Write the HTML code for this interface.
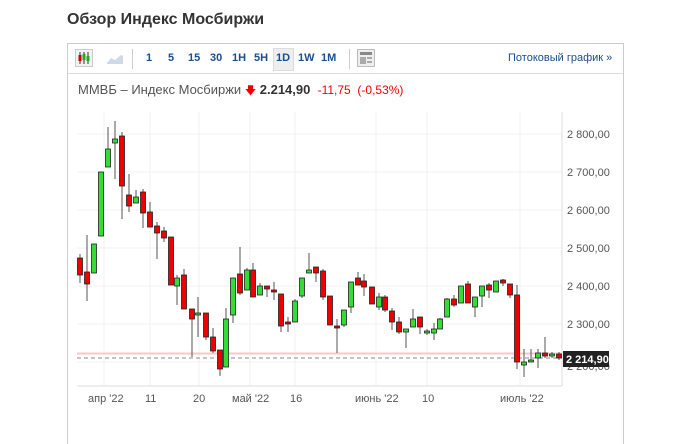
<!DOCTYPE html><html><head><meta charset="utf-8"><style>
body{margin:0;background:#fff;font-family:"Liberation Sans",sans-serif;width:675px;height:429px;overflow:hidden;position:relative}
.t{position:absolute;left:67px;top:11px;font-size:16px;font-weight:bold;color:#333}
.p{position:absolute;left:67px;top:43px;width:555px;height:400px;border:1px solid #ccc;border-bottom:none}
.tb{position:absolute;left:0;top:0;width:555px;height:29px;border-bottom:1px solid #ddd}
.b{position:absolute;top:8px;font-size:11px;color:#1a4e8f;font-weight:bold}
.sep{position:absolute;top:5px;width:1px;height:20px;background:#ccc}
</style></head><body>
<div class="t">Обзор Индекс Мосбиржи</div>
<div class="p">
<div class="tb">
<svg style="position:absolute;left:7px;top:5px" width="18" height="18"><rect x="0.5" y="0.5" width="17" height="17" fill="#f2f2f2" stroke="#ccc"/><line x1="5" y1="3" x2="5" y2="15" stroke="#333"/><rect x="3.5" y="6" width="3" height="6" fill="#c00"/><line x1="9" y1="3" x2="9" y2="15" stroke="#333"/><rect x="7.5" y="5" width="3" height="6" fill="#2a2"/><line x1="13" y1="3" x2="13" y2="15" stroke="#333"/><rect x="11.5" y="7" width="3" height="5" fill="#2a2"/></svg>
<svg style="position:absolute;left:39px;top:8px" width="16" height="12"><path d="M0 11 L4 6 L8 8 L14 3 L16 4 L16 12 L0 12Z" fill="#cfd9e8"/></svg>
<div class="sep" style="left:64px"></div>
<span class="b" style="left:78px">1</span><span class="b" style="left:100px">5</span><span class="b" style="left:120px">15</span><span class="b" style="left:142px">30</span><span class="b" style="left:164px">1H</span><span class="b" style="left:186px">5H</span>
<div style="position:absolute;left:205px;top:4px;width:19px;height:21px;background:#eee;border:1px solid #ddd"></div><span class="b" style="left:208px">1D</span>
<span class="b" style="left:230px">1W</span><span class="b" style="left:253px">1M</span>
<div class="sep" style="left:281px"></div>
<svg style="position:absolute;left:289px;top:5px" width="18" height="18"><rect x="0.5" y="0.5" width="17" height="17" fill="#eee" stroke="#bbb"/><rect x="3" y="3" width="12" height="3" fill="#888"/><rect x="3" y="8" width="6" height="7" fill="#aaa"/><rect x="10" y="8" width="5" height="2" fill="#aaa"/><rect x="10" y="12" width="5" height="2" fill="#aaa"/></svg>
<span class="b" style="left:440px;font-weight:normal">Потоковый график »</span>
</div>
<div style="position:absolute;left:10px;top:38px;font-size:13px;color:#555;white-space:nowrap">ММВБ – Индекс Мосбиржи <span style="color:#e00;font-size:11px">&#129095;</span> <b style="color:#333">2.214,90</b> &nbsp;<span style="color:#e00;font-size:12px">-11,75 &nbsp;(-0,53%)</span></div>
</div>
<svg style="position:absolute;left:0;top:0" width="675" height="429" id="c"></svg>
<script>
var s=document.getElementById('c'),h='';
[134,172,210,248,286,324,362].forEach(y=>h+=`<line x1="77" x2="562" y1="${y}" y2="${y}" stroke="#f0f0f0"/>`);
[104,150,199,250,295,376,427,520].forEach(x=>h+=`<line x1="${x}" x2="${x}" y1="112" y2="386" stroke="#f0f0f0"/>`);
h+=`<line x1="77" x2="562" y1="386" y2="386" stroke="#ddd"/><line x1="562" x2="562" y1="112" y2="386" stroke="#ddd"/>`;
h+=`<line x1="77" x2="562" y1="353.5" y2="353.5" stroke="#f8c8c8" stroke-width="2"/><line x1="77" x2="562" y1="358" y2="358" stroke="#888" stroke-dasharray="4,3"/>`;
var c=[[80,258,275,254,283,0],[87,272,284,235,301,0],[94,244,273,244,273,1],[101,172,236,172,236,1],[108,149,167,127,167,1],[115,139,143,121,179,1],[122,136,186,132,219,0],[129,195,206,174,212,0],[136,197,203,190,203,1],[143,192,213,189,228,0],[150,212,227,202,227,0],[157,226,233,222,259,0],[164,231,238,227,242,0],[171,237,285,237,285,0],[177,278,286,275,305,1],[184,275,309,269,309,0],[192,309,319,309,357,0],[198,313,315,297,337,1],[206,313,337,313,340,0],[213,337,351,328,353,0],[220,350,369,350,376,0],[226,319,367,308,367,1],[233,278,315,278,323,1],[240,274,293,247,295,0],[247,270,290,268,290,1],[253,270,297,263,297,0],[260,286,295,283,295,1],[267,286,289,286,297,0],[274,290,292,282,300,0],[281,294,326,294,332,0],[288,322,324,317,332,0],[295,301,322,299,322,1],[302,278,296,278,298,1],[309,270,273,253,273,1],[316,267,273,267,282,0],[323,271,297,269,300,0],[330,296,325,296,325,0],[337,326,328,319,353,0],[344,310,325,310,327,1],[351,282,307,282,313,1],[358,278,285,272,285,0],[364,281,287,274,296,0],[372,287,304,287,304,0],[379,297,307,293,310,1],[385,297,310,295,312,0],[392,311,322,308,330,0],[399,322,332,317,334,0],[406,329,332,329,348,1],[413,319,327,309,327,1],[420,317,327,317,334,0],[427,331,333,329,335,1],[434,329,333,323,340,1],[440,319,329,318,329,1],[447,299,317,298,317,1],[454,299,305,295,307,0],[461,286,303,286,303,1],[468,284,303,281,303,0],[475,297,307,297,317,1],[482,286,296,286,307,1],[489,285,290,283,298,0],[496,281,292,281,292,1],[503,280,283,279,286,0],[510,284,295,284,298,0],[517,295,362,285,369,0],[524,362,365,349,377,1],[531,360,362,349,362,1],[538,353,358,349,368,1],[545,353,356,337,358,0],[552,354,356,352,358,1],[559,354,358,352,360,0]];
c.forEach(a=>{h+=`<line x1="${a[0]}" x2="${a[0]}" y1="${a[3]}" y2="${a[4]}" stroke="#555"/><rect x="${a[0]-2.5}" y="${a[1]}" width="5" height="${Math.max(2,a[2]-a[1])}" fill="${a[5]?'#3d3':'#e00'}" stroke="#222" stroke-width="0.8"/>`});
[[134,'2 800,00'],[172,'2 700,00'],[210,'2 600,00'],[248,'2 500,00'],[286,'2 400,00'],[324,'2 300,00'],[366,'2 200,00']].forEach(a=>h+=`<text x="567" y="${a[0]+4}" font-size="11" fill="#555" font-family="Liberation Sans">${a[1]}</text>`);
h+=`<rect x="563" y="351" width="46" height="16" fill="#222"/><text x="566" y="363" font-size="11" font-weight="bold" fill="#fff" font-family="Liberation Sans">2 214,90</text>`;
[[88,'апр \'22'],[145,'11'],[193,'20'],[232,'май \'22'],[290,'16'],[355,'июнь \'22'],[422,'10'],[500,'июль \'22']].forEach(a=>h+=`<text x="${a[0]}" y="402" font-size="11" fill="#555" font-family="Liberation Sans">${a[1]}</text>`);
s.innerHTML=h;
</script>
</body></html>
